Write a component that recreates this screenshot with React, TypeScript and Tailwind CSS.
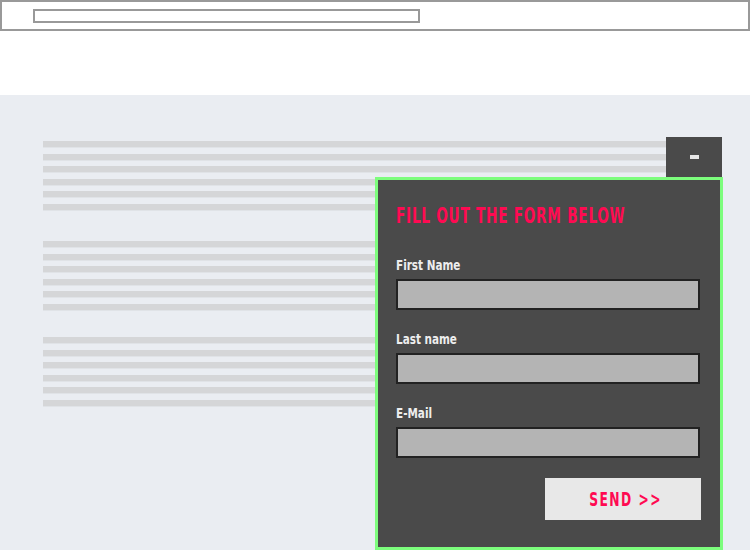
import React from 'react';

const font = { fontFamily: '"DejaVu Sans Condensed", "DejaVu Sans", sans-serif' };

const LineGroup: React.FC<{ className?: string }> = ({ className = '' }) => (
  <div className={`flex flex-col gap-[5.6px] ${className}`}>
    {[0, 1, 2, 3, 4, 5].map(i => (
      <div key={i} className="h-[7px] bg-[#d5d6d8] border-b border-[#e0e3e7]" />
    ))}
  </div>
);

const Field: React.FC<{ label: string }> = ({ label }) => (
  <div className="flex flex-col">
    <label className="h-[20px] text-[14.5px] font-bold text-[#eeeeee] leading-[20px]">
      <span className="inline-block origin-left scale-x-[0.8]">{label}</span>
    </label>
    <div className="mt-[4px] h-[31px] w-[304px] border-2 border-[#222] bg-[#b4b4b4]" />
  </div>
);

export default function App() {
  return (
    <div className="w-[750px] h-[550px] overflow-hidden bg-white" style={font}>
      {/* browser-ish top bar */}
      <div className="h-[31px] border-2 border-[#999] pl-[31px] pt-[7px]">
        <div className="w-[387px] h-[14px] border-2 border-[#999]" />
      </div>

      <div className="relative mt-[64px] h-[455px] bg-[#eaedf2] pl-[43px] pt-[46px]">
        <div className="w-[679px]">
          <LineGroup />
          <LineGroup className="mt-[30px]" />
          <LineGroup className="mt-[26px]" />
        </div>

        {/* slide-in form */}
        <div className="absolute right-[27px] top-[42px] flex flex-col items-end">
          <button className="w-[56px] h-[40px] mr-px bg-[#4a4a4a] flex items-center justify-center">
            <span className="block w-[9px] h-[4px] bg-[#e6e6e6]" />
          </button>
          <div className="w-[348px] h-[373px] border-[3px] border-[#7dfd7d] bg-[#4a4a4a] pl-[18px] pr-[20px] pt-[24px]">
            <h2 className="h-[24px] whitespace-nowrap text-[20.5px] font-bold text-[#ff0a52] leading-[24px] tracking-[1px]">
              <span className="inline-block origin-left scale-x-[0.74]">FILL OUT THE FORM BELOW</span>
            </h2>
            <div className="mt-[27px] flex flex-col gap-[19px]">
              <Field label="First Name" />
              <Field label="Last name" />
              <Field label="E-Mail" />
            </div>
            <div className="mt-[20px] flex justify-end">
              <button className="w-[156px] h-[42px] mr-[-1px] bg-[#e8e8e8] text-[#ff0a52] text-[19px] font-bold tracking-[2px] whitespace-nowrap">
                <span className="inline-block scale-x-[0.72] translate-x-[3px]">SEND &gt;&gt;</span>
              </button>
            </div>
          </div>
        </div>
      </div>
    </div>
  );
}
